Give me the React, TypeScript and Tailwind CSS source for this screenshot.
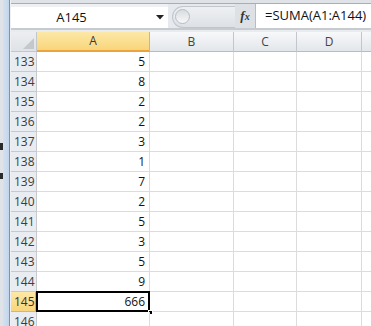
const rows: [number, string][] = [
  [133, "5"],
  [134, "8"],
  [135, "2"],
  [136, "2"],
  [137, "3"],
  [138, "1"],
  [139, "7"],
  [140, "2"],
  [141, "5"],
  [142, "3"],
  [143, "5"],
  [144, "9"],
  [145, "666"],
  [146, ""],
];

const font = { fontFamily: '"Open Sans", "Liberation Sans", sans-serif' };

function ColHeader({ label, width, selected }: { label: string; width: string; selected?: boolean }) {
  return (
    <div
      className={`${width} shrink-0 h-full flex items-center justify-center border-r text-[12px] ${
        selected
          ? "bg-gradient-to-b from-[#fde8a6] to-[#f9d57a] border-[#e2b35b] border-b-2 border-b-[#eaa43e] text-[#3a3a3a]"
          : "bg-gradient-to-b from-[#f7f8fa] to-[#e3e6ea] border-[#c3c7cc] border-b border-b-[#b8bcc2] text-[#444]"
      }`}
    >
      {label}
    </div>
  );
}

function Row({ num, value }: { num: number; value: string }) {
  const active = num === 145;
  return (
    <div className="h-[20px] flex shrink-0">
      <div
        className={`w-[26px] shrink-0 h-full flex items-center pl-[3px] text-[12px] border-b border-r ${
          active
            ? "bg-gradient-to-b from-[#fde8a6] to-[#f9d57a] border-[#e2b35b] border-r-2 border-r-[#eaa43e] text-[#333]"
            : "bg-[#e9ecf0] border-[#c6cacf] text-[#3c3c3c]"
        }`}
      >
        {num}
      </div>
      <div className="w-[113px] shrink-0 h-full relative flex items-center justify-end pr-[4px] text-[12px] text-[#111] border-b border-r border-[#dadcdd]">
        {value}
        {active && (
          <>
            <div className="absolute -left-px -top-px -right-px -bottom-px border-2 border-black" />
            <div className="absolute -right-[4px] -bottom-[4px] w-[5px] h-[5px] bg-black border border-white" />
          </>
        )}
      </div>
      <div className="w-[84px] shrink-0 h-full border-b border-r border-[#dadcdd]" />
      <div className="w-[63px] shrink-0 h-full border-b border-r border-[#dadcdd]" />
      <div className="w-[65px] shrink-0 h-full border-b border-r border-[#dadcdd]" />
      <div className="flex-1 h-full border-b border-[#dadcdd]" />
    </div>
  );
}

export default function App() {
  return (
    <div className="w-[371px] h-[326px] overflow-hidden bg-white flex" style={font}>
      {/* window frame on the left */}
      <div className="w-[11px] shrink-0 h-full flex">
        <div className="w-[3px] h-full bg-[#dfe3e8]" />
        <div className="w-[6px] h-full bg-gradient-to-r from-[#d3e1f1] to-[#c4d5ea] flex flex-col">
          <div className="h-[143px]" />
          <div className="w-[3px] h-[7px] bg-[#2a2a2a] -ml-[3px]" />
          <div className="h-[23px]" />
          <div className="w-[3px] h-[6px] bg-[#2a2a2a] -ml-[3px]" />
        </div>
        <div className="w-px h-full bg-[#8b9097]" />
        <div className="w-px h-full bg-[#eef0f3]" />
      </div>

      <div className="flex-1 h-full flex flex-col min-w-0">
        {/* ribbon bottom edge */}
        <div className="h-[3px] shrink-0 bg-[#dfe3e8]" />
        <div className="h-px shrink-0 bg-[#a9aeb5]" />

        {/* formula bar */}
        <div className="h-[24px] shrink-0 flex bg-[#e6e9ed]">
          <div className="w-[157px] shrink-0 flex flex-col">
            <div className="h-[3px] bg-[#eef0f3]" />
            <div className="flex-1 bg-white flex items-center relative text-[13px] text-[#111]">
              <span className="flex-1 text-center pr-[24px]">A145</span>
              <svg width="9" height="5" viewBox="0 0 9 5" className="mr-[3px]">
                <path d="M0 0 H8 L4 4.5 Z" fill="#222" />
              </svg>
            </div>
          </div>
          <div className="w-[4px] shrink-0 bg-[#e6e9ed]" />
          <div className="w-[63px] shrink-0 flex items-center pt-[1px]">
            <div className="h-[22px] w-full rounded-l-full bg-gradient-to-b from-[#eef0f3] to-[#dde1e6] border border-r-0 border-[#c2c6cc] flex items-center pl-[2px]">
              <div className="w-[15px] h-[15px] rounded-full bg-gradient-to-b from-[#d9dce0] to-[#f7f8f9] border border-[#b9bdc3]" />
            </div>
          </div>
          <div className="w-[20px] shrink-0 flex items-center justify-center bg-[#dde1e6]">
            <span className="italic font-bold text-[13px] text-[#333]" style={{ fontFamily: '"Liberation Serif", serif' }}>
              f<span className="text-[10px]">x</span>
            </span>
          </div>
          <div className="w-px shrink-0 bg-[#b9bdc3]" />
          <div className="flex-1 bg-white flex items-center pl-[9px] text-[13px] text-[#111] whitespace-nowrap">
            =SUMA(A1:A144)
          </div>
        </div>

        <div className="h-[2px] shrink-0 bg-[#c7cbd0]" />
        <div className="h-[2px] shrink-0 bg-[#e9ecef]" />

        {/* column headers */}
        <div className="h-[20px] shrink-0 flex">
          <div className="w-[26px] shrink-0 h-full bg-gradient-to-b from-[#eceef1] to-[#dfe2e6] border-r border-b border-[#c3c7cc] flex items-end justify-end p-[2px]">
            <svg width="11" height="11" viewBox="0 0 11 11">
              <path d="M11 0 V11 H0 Z" fill="#c4c8cd" />
            </svg>
          </div>
          <ColHeader label="A" width="w-[113px]" selected />
          <ColHeader label="B" width="w-[84px]" />
          <ColHeader label="C" width="w-[63px]" />
          <ColHeader label="D" width="w-[65px]" />
          <div className="flex-1 h-full bg-gradient-to-b from-[#f7f8fa] to-[#e3e6ea] border-b border-[#b8bcc2]" />
        </div>

        {/* rows */}
        <div className="flex flex-col">
          {rows.map(([n, v]) => (
            <Row key={n} num={n} value={v} />
          ))}
        </div>
      </div>
    </div>
  );
}
